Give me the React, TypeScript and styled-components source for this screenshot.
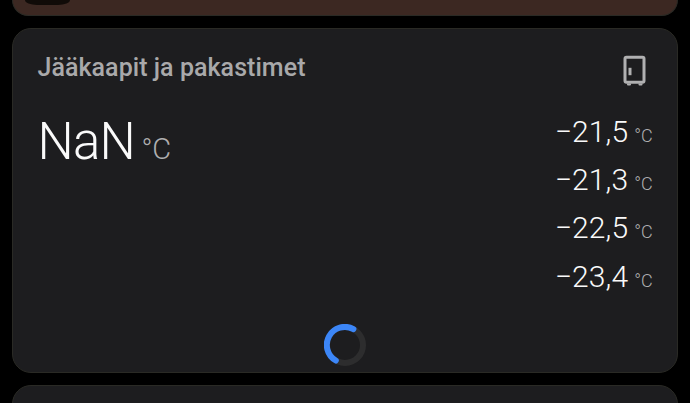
import styled, { createGlobalStyle } from "styled-components";

const readings = ["−21,5", "−21,3", "−22,5", "−23,4"];

function FridgeIcon() {
  return (
    <svg width="24" height="32" viewBox="0 0 24 32" fill="none">
      <rect x="2" y="2.2" width="19" height="25" rx="1.5" stroke="#b0b0b1" strokeWidth="3" />
      <path d="M4 28.5h4v1a1 1 0 0 1-1 1H5a1 1 0 0 1-1-1zM15.5 28.5h4v1a1 1 0 0 1-1 1h-2a1 1 0 0 1-1-1z" fill="#b0b0b1" />
      <path d="M5.5 12.8h3v7.4h-3z" fill="#b0b0b1" />
    </svg>
  );
}

function Spinner() {
  return (
    <svg width="42" height="42" viewBox="0 0 42 42" fill="none" strokeWidth="6">
      <circle cx="21" cy="21" r="18" stroke="#2d2d2e" />
      <path d="M29.4 5.1A18 18 0 0 0 11.8 36.5" stroke="#3c86f7" strokeLinecap="round" />
    </svg>
  );
}

function App() {
  return (
    <Page>
      <GlobalStyle />
      <TopCard>
        <Thumbnail />
      </TopCard>
      <Card>
        <Header>
          <Title>Jääkaapit ja pakastimet</Title>
          <FridgeIcon />
        </Header>
        <Content>
          <Average>
            NaN<Unit $size={29} $gap={6.5}>°C</Unit>
          </Average>
          <List>
            {readings.map((reading) => (
              <Reading key={reading}>
                {reading}
                <Unit $size={18} $gap={6}>°C</Unit>
              </Reading>
            ))}
          </List>
        </Content>
        <Footer>
          <Spinner />
        </Footer>
      </Card>
      <NextCard />
    </Page>
  );
}

const GlobalStyle = createGlobalStyle`
  body {
    margin: 0;
    background: #000;
    overflow: hidden;
    font-family: Roboto, "Liberation Sans", sans-serif;
  }
`;

const Page = styled.div`
  box-sizing: border-box;
  height: 403px;
  padding: 0 12px;
  display: flex;
  flex-direction: column;
  gap: 12px;
  overflow: hidden;
`;

const Surface = styled.section`
  box-sizing: border-box;
  flex-shrink: 0;
  border: 1px solid #2a2a25;
  border-radius: 19px;
  background: #1d1d1f;
`;

const TopCard = styled(Surface)`
  height: 16px;
  border-top: 0;
  border-radius: 0 0 19px 19px;
  padding-left: 12px;
  background: #3c2822;
`;

const Thumbnail = styled.div`
  width: 45px;
  height: 5px;
  border-radius: 0 0 12px 12px / 0 0 5px 5px;
  background: #100b08;
`;

const Card = styled(Surface)`
  height: 345px;
  display: flex;
  flex-direction: column;
`;

const Header = styled.header`
  display: flex;
  justify-content: space-between;
  padding: 26px 30px 0 24.5px;
  height: 32px;
`;

const Title = styled.h2`
  margin: 0;
  color: #a9a9aa;
  font-size: 25px;
  font-weight: 500;
  line-height: 26px;
  letter-spacing: 0.05px;
`;

const Content = styled.div`
  display: flex;
  justify-content: space-between;
  flex: 1;
  padding: 20px 24.5px 0;
`;

const Average = styled.div`
  height: 80px;
  color: #fafafa;
  font-size: 51px;
  font-weight: 300;
  line-height: 70px;
  letter-spacing: -0.8px;
`;

const List = styled.div`
  display: flex;
  flex-direction: column;
  padding-top: 0.8px;
`;

const Reading = styled.div`
  height: 48.3px;
  color: #fafafa;
  font-size: 30px;
  font-weight: 300;
  line-height: 48px;
  letter-spacing: 0.15px;
  text-align: right;
  white-space: nowrap;
`;

const Unit = styled.span<{ $size: number; $gap: number }>`
  margin-left: ${(props) => props.$gap}px;
  color: #afafb0;
  font-size: ${(props) => props.$size}px;
  line-height: 1;
  letter-spacing: -0.1px;
`;

const Footer = styled.footer`
  display: flex;
  justify-content: center;
  padding-bottom: 6px;
`;

const NextCard = styled(Surface)`
  height: 60px;
`;

export default App;
